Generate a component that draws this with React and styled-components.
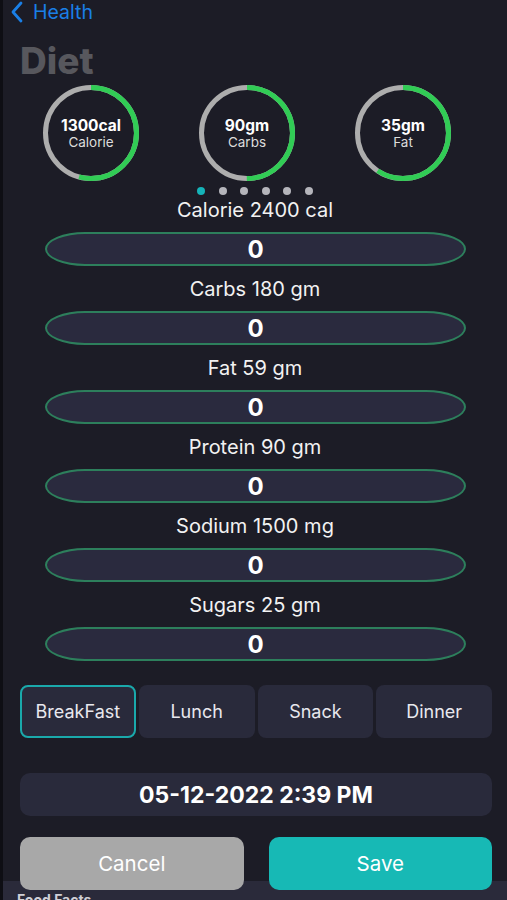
import React from 'react'
import styled, { createGlobalStyle } from 'styled-components'

const GlobalStyle = createGlobalStyle`
  html, body {
    margin: 0;
    padding: 0;
    background: #1c1c26;
  }
  * { box-sizing: border-box; }
`

const rings = [
  { value: '1300cal', label: 'Calorie', pct: 1300 / 2400 },
  { value: '90gm', label: 'Carbs', pct: 90 / 180 },
  { value: '35gm', label: 'Fat', pct: 35 / 59 },
]

const fields = [
  'Calorie 2400 cal',
  'Carbs 180 gm',
  'Fat 59 gm',
  'Protein 90 gm',
  'Sodium 1500 mg',
  'Sugars 25 gm',
]

const meals = ['BreakFast', 'Lunch', 'Snack', 'Dinner']

function Ring({ value, label, pct }) {
  const r = 45.5
  const len = 2 * Math.PI * r
  return (
    <RingBox>
      <svg width="96" height="96" viewBox="0 0 96 96">
        <circle cx="48" cy="48" r={r} fill="none" stroke="#adadad" strokeWidth="5" />
        <circle
          cx="48"
          cy="48"
          r={r}
          fill="none"
          stroke="#31cc55"
          strokeWidth="5"
          strokeDasharray={`${len * pct} ${len}`}
          transform="rotate(-90 48 48)"
        />
      </svg>
      <RingText>
        <RingValue>{value}</RingValue>
        <RingLabel>{label}</RingLabel>
      </RingText>
    </RingBox>
  )
}

function App() {
  return (
    <Page>
      <GlobalStyle />
      <BackRow>
        <svg width="14" height="22" viewBox="0 0 14 22">
          <path d="M11 2 L3 11 L11 20" fill="none" stroke="#1a7fe6" strokeWidth="2.8" strokeLinecap="round" strokeLinejoin="round" />
        </svg>
        <BackText>Health</BackText>
      </BackRow>
      <Title>Diet</Title>
      <Rings>
        {rings.map((r) => (
          <Ring key={r.label} {...r} />
        ))}
      </Rings>
      <Dots>
        {[0, 1, 2, 3, 4, 5].map((i) => (
          <Dot key={i} active={i === 0} />
        ))}
      </Dots>
      {fields.map((f) => (
        <Field key={f}>
          <FieldLabel>{f}</FieldLabel>
          <FieldInput>0</FieldInput>
        </Field>
      ))}
      <Tabs>
        {meals.map((m, i) => (
          <Tab key={m} selected={i === 0}>{m}</Tab>
        ))}
      </Tabs>
      <DateBox>05-12-2022 2:39 PM</DateBox>
      <Buttons>
        <ActionButton color="#a8a8a8">Cancel</ActionButton>
        <ActionButton color="#17b9b5">Save</ActionButton>
      </Buttons>
      <BottomStrip>Food Facts</BottomStrip>
    </Page>
  )
}

export default App

const Page = styled.div`
  position: relative;
  width: 507px;
  height: 900px;
  overflow: hidden;
  background: #1c1c26;
  font-family: Inter, "Noto Sans", sans-serif;
  color: #fff;
  border-left: 3px solid #0e0e14;
`

const BackRow = styled.div`
  display: flex;
  align-items: center;
  gap: 9px;
  height: 24px;
  padding-left: 7px;
`

const BackText = styled.span`
  color: #1a7fe6;
  font-size: 19.5px;
`

const Title = styled.div`
  margin-top: 18px;
  padding-left: 17px;
  font-size: 37px;
  font-weight: 800;
  line-height: 38px;
  color: #57575d;
`

const Rings = styled.div`
  display: flex;
  gap: 60px;
  margin-top: 5px;
  padding-left: 40px;
`

const RingBox = styled.div`
  position: relative;
  width: 96px;
  height: 96px;
  svg { display: block; }
`

const RingText = styled.div`
  position: absolute;
  inset: 0;
  display: flex;
  flex-direction: column;
  align-items: center;
  justify-content: center;
`

const RingValue = styled.div`
  font-size: 15.5px;
  font-weight: 700;
  line-height: 18px;
`

const RingLabel = styled.div`
  font-size: 13.5px;
  line-height: 15px;
  color: #dcdcdc;
`

const Dots = styled.div`
  display: flex;
  justify-content: center;
  gap: 13.5px;
  margin-top: 6px;
  height: 8px;
`

const Dot = styled.div`
  width: 8px;
  height: 8px;
  border-radius: 50%;
  background: ${(p) => (p.active ? '#15b3b8' : '#b5b5bb')};
`

const Field = styled.div`
  display: flex;
  flex-direction: column;
  align-items: center;
  margin-top: 4px;
  margin-bottom: 8px;
  & + & { margin-top: 12px; margin-bottom: 0; }
`

const FieldLabel = styled.div`
  font-size: 20px;
  line-height: 22px;
  color: #f2f2f2;
`

const FieldInput = styled.div`
  margin-top: 11px;
  margin-left: 1px;
  width: 421px;
  height: 34px;
  display: flex;
  align-items: center;
  justify-content: center;
  background: #2a2a3e;
  border: 2px solid #2d7f5c;
  border-radius: 40px / 17px;
  font-size: 24px;
  font-weight: 700;
`

const Tabs = styled.div`
  display: grid;
  grid-template-columns: repeat(4, 1fr);
  gap: 3px;
  margin: 24px 15px 0 17px;
`

const Tab = styled.div`
  height: 53px;
  display: flex;
  align-items: center;
  justify-content: center;
  background: #292a3b;
  border-radius: 8px;
  border: 2px solid ${(p) => (p.selected ? '#1aa9ab' : 'transparent')};
  font-size: 18px;
  color: #e8e8ee;
`

const DateBox = styled.div`
  margin: 35px 15px 0 17px;
  height: 43px;
  display: flex;
  align-items: center;
  justify-content: center;
  background: #292a3b;
  border-radius: 10px;
  font-size: 23px;
  font-weight: 700;
`

const Buttons = styled.div`
  position: relative;
  z-index: 1;
  display: grid;
  grid-template-columns: 1fr 1fr;
  gap: 25px;
  margin: 21px 15px 0 17px;
`

const ActionButton = styled.div`
  height: 53px;
  display: flex;
  align-items: center;
  justify-content: center;
  background: ${(p) => p.color};
  border-radius: 10px;
  font-size: 20.5px;
  color: #fff;
`

const BottomStrip = styled.div`
  position: absolute;
  left: 0;
  right: 0;
  bottom: 0;
  height: 19px;
  background: #2a2a3a;
  padding: 12px 0 0 14px;
  font-size: 14px;
  font-weight: 700;
  line-height: 14px;
  color: #cfcfd6;
  overflow: hidden;
`
